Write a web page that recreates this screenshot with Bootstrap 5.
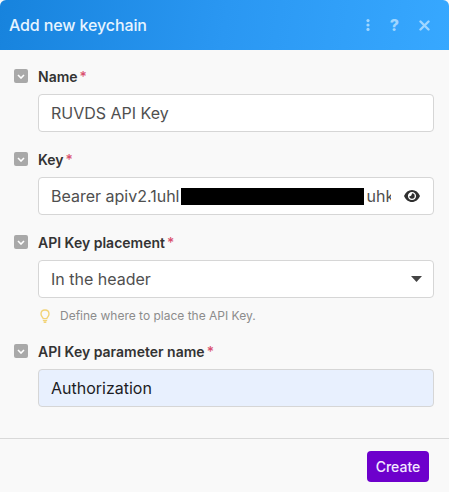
<!DOCTYPE html>
<html lang="en">
<head>
    <meta charset="UTF-8">
    <title>Add new keychain</title>
    <link href="https://cdn.jsdelivr.net/npm/bootstrap@5.3.3/dist/css/bootstrap.min.css" rel="stylesheet">
    <style>
        html, body { height: 100%; }
        body { background: #f9f9f9; font-family: Inter, "Liberation Sans", sans-serif; overflow: hidden; }
        .dlg { height: 492px; }
        .dlg-head { height: 50px; padding: 0 19px 0 9px; color: #e6f4ff; border-radius: 6px 6px 0 0; background: linear-gradient(100deg, #1783dd 0%, #2a97f2 50%, #37a8ff 100%); }
        .dlg-title { font-size: 16px; font-weight: 500; letter-spacing: -0.12px; }
        .head-icons { color: #9fd6ff; gap: 19px; }
        .head-q { font-size: 16px; font-weight: 800; line-height: 1; width: 11px; text-align: center; }
        .dlg-body { padding: 19px 15px 0 14px; }
        .fld { margin-bottom: 20px; }
        .fld-label { height: 14px; margin-bottom: 11px; gap: 10px; font-size: 14px; font-weight: 600; color: #333; }
        .fld-toggle { width: 14px; height: 14px; border-radius: 2px; background: #a9a9a9; flex: none; }
        .req { color: #d9506f; margin-left: 2px; font-weight: 500; }
        .fld-input { margin-left: 24px; width: 396px; }
        .fld-input.form-control, .fld-input.form-select { height: 38px; padding: 0 12px; font-size: 16px; color: #4f4f4f; border: 1px solid #d6d6d6; border-radius: 4px; line-height: 36px; }
        .fld-input.form-select { background-image: url("data:image/svg+xml,%3Csvg xmlns='http://www.w3.org/2000/svg' width='11' height='6'%3E%3Cpath d='M0 0h11L5.5 6z' fill='%23444'/%3E%3C/svg%3E"); background-size: 11px 6px; background-position: right 11px center; }
        .fld-filled.form-control { background: #e8f0fe; color: #1c1c24; }
        .key-box { gap: 0; }
        .key-val { width: 340px; overflow: hidden; white-space: nowrap; }
        .key-mask { display: inline-block; width: 183px; height: 17px; background: #000; margin-left: 2px; margin-right: 2px; flex: none; }
        .key-box svg { margin-right: 1px; }
        .hint { margin: 9px 0 0 26px; height: 17px; gap: 10px; font-size: 12px; color: #8c8c8c; }
        .dlg-foot { border-top: 1px solid #d9d9d9; padding: 12px 20px 0 0; margin-top: 31px; }
        .btn-make { background: #6d00cc; color: #f3e8ff; font-size: 14px; font-weight: 500; width: 62px; height: 31px; padding: 0; border-radius: 4px; border: 0; }
        .btn-make:hover { background: #6d00cc; color: #f3e8ff; }
    </style>
</head>
<body>
    <div class="dlg d-flex flex-column">
        <div class="dlg-head d-flex align-items-center justify-content-between">
            <div class="dlg-title">Add new keychain</div>
            <div class="head-icons d-flex align-items-center">
                <svg width="4" height="12" viewBox="0 0 4 12" fill="currentColor"><circle cx="2" cy="1.6" r="1.6"/><circle cx="2" cy="6" r="1.6"/><circle cx="2" cy="10.4" r="1.6"/></svg>
                <span class="head-q">?</span>
                <svg width="11" height="11" viewBox="0 0 11 11" fill="none" stroke="currentColor" stroke-width="2.4" stroke-linecap="round"><path d="M1.5 1.5l8 8M9.5 1.5l-8 8"/></svg>
            </div>
        </div>

        <div class="dlg-body">
            <div class="fld">
                <div class="fld-label d-flex align-items-center">
                    <span class="fld-toggle d-flex align-items-center justify-content-center"><svg width="8" height="5" viewBox="0 0 8 5" fill="none" stroke="#fff" stroke-width="1.6"><path d="M1 1l3 3 3-3"/></svg></span>
                    <span>Name<span class="req">*</span></span>
                </div>
                <input class="form-control fld-input" type="text" value="RUVDS API Key">
            </div>

            <div class="fld">
                <div class="fld-label d-flex align-items-center">
                    <span class="fld-toggle d-flex align-items-center justify-content-center"><svg width="8" height="5" viewBox="0 0 8 5" fill="none" stroke="#fff" stroke-width="1.6"><path d="M1 1l3 3 3-3"/></svg></span>
                    <span>Key<span class="req">*</span></span>
                </div>
                <div class="form-control fld-input key-box d-flex align-items-center justify-content-between">
                    <div class="key-val d-flex align-items-center"><span>Bearer apiv2.1uhl</span><span class="key-mask"></span><span>uhk</span></div>
                    <svg width="16" height="12" viewBox="0 0 16 12"><path fill-rule="evenodd" fill="#2f2f2f" d="M8 0C4.5 0 1.6 2.3 0 6c1.6 3.7 4.5 6 8 6s6.400-2.300 8-6c-1.600-3.700-4.500-6-8-6zM8 1.900c2.300 0 4.100 1.800 4.100 4.100S10.300 10.100 8 10.100 3.900 8.300 3.900 6 5.700 1.900 8 1.900z"/><path fill="#2f2f2f" d="M8 3.300a2.700 2.700 0 1 1-2.700 2.700c.9.600 2.500-.1 2.700-2.700z"/></svg>
                </div>
            </div>

            <div class="fld">
                <div class="fld-label d-flex align-items-center">
                    <span class="fld-toggle d-flex align-items-center justify-content-center"><svg width="8" height="5" viewBox="0 0 8 5" fill="none" stroke="#fff" stroke-width="1.6"><path d="M1 1l3 3 3-3"/></svg></span>
                    <span>API Key placement<span class="req">*</span></span>
                </div>
                <select class="form-select fld-input">
                    <option>In the header</option>
                </select>
                <div class="hint d-flex align-items-center">
                    <svg width="10" height="14" viewBox="0 0 10 14" fill="none" stroke="#f2d377" stroke-width="1.4" stroke-linecap="round"><path d="M3.200 9.600C3 8.300 1 7.300 1 5 1 2.600 2.800 1 5 1s4 1.600 4 4c0 2.300-2 3.300-2.200 4.600z"/><path d="M3.400 11.600h3.200M4.200 13.200h1.600"/></svg>
                    <span>Define where to place the API Key.</span>
                </div>
            </div>

            <div class="fld mb-0">
                <div class="fld-label d-flex align-items-center">
                    <span class="fld-toggle d-flex align-items-center justify-content-center"><svg width="8" height="5" viewBox="0 0 8 5" fill="none" stroke="#fff" stroke-width="1.6"><path d="M1 1l3 3 3-3"/></svg></span>
                    <span>API Key parameter name<span class="req">*</span></span>
                </div>
                <input class="form-control fld-input fld-filled" type="text" value="Authorization">
            </div>
        </div>

        <div class="dlg-foot d-flex justify-content-end">
            <button class="btn btn-make">Create</button>
        </div>
    </div>
    <script src="https://cdn.jsdelivr.net/npm/bootstrap@5.3.3/dist/js/bootstrap.bundle.min.js"></script>
</body>
</html>
